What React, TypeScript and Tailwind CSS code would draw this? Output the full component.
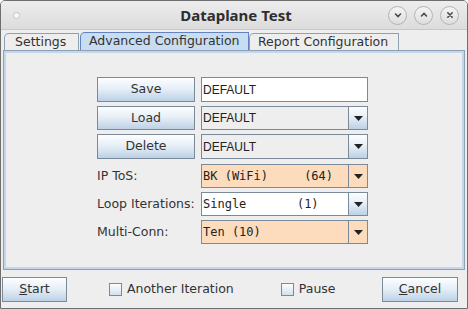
import React from 'react';

const ui = { fontFamily: '"DejaVu Sans", sans-serif' };
const field = { fontFamily: '"Liberation Sans", Arial, sans-serif' };
const mono = { fontFamily: '"DejaVu Sans Mono", monospace' };

function Arrow() {
  return (
    <svg width="9" height="5" viewBox="0 0 9 5">
      <path d="M0 0 H9 L4.5 5 Z" fill="#222" />
    </svg>
  );
}

function SwingButton({ children, className = '' }: { children: React.ReactNode; className?: string }) {
  return (
    <div
      className={`flex items-center justify-center border border-[#7a8a99] bg-gradient-to-b from-[#fdfeff] via-[#e4edf6] to-[#bcd1e6] text-[12.5px] text-[#333] ${className}`}
      style={ui}
    >
      {children}
    </div>
  );
}

function Combo({
  text,
  monoFont = false,
  bg = 'gray',
  h = 'h-[24px]',
}: {
  text: string;
  monoFont?: boolean;
  bg?: 'gray' | 'white' | 'peach';
  h?: string;
}) {
  const fieldBg = bg === 'peach' ? 'bg-[#fcdcbc]' : bg === 'white' ? 'bg-white' : 'bg-[#eeeeee]';
  const arrowBg =
    bg === 'peach'
      ? 'bg-[#fcdcbc]'
      : 'bg-gradient-to-b from-[#fdfeff] via-[#e4edf6] to-[#bcd1e6]';
  return (
    <div className={`flex w-[167px] ${h} border border-[#7a8a99]`}>
      <div
        className={`flex-1 flex items-center pl-[1px] whitespace-pre text-[12px] text-[#222] border-r border-[#7a8a99] ${fieldBg}`}
        style={monoFont ? mono : field}
      >
        {text}
      </div>
      <div className={`w-[18px] flex items-center justify-center ${arrowBg}`}>
        <Arrow />
      </div>
    </div>
  );
}

function Check({ label }: { label: string }) {
  return (
    <div className="flex items-center gap-[5px]" style={ui}>
      <div className="w-[13px] h-[13px] border border-[#7a8a99] bg-gradient-to-b from-[#fdfeff] to-[#d2e0ee]" />
      <span className="text-[12.5px] text-[#333]">{label}</span>
    </div>
  );
}

function TitleButton({ kind }: { kind: 'min' | 'max' | 'close' }) {
  return (
    <div className="w-[19px] h-[19px] rounded-full border border-[#b4b4b4] bg-gradient-to-b from-[#f4f4f4] to-[#dedede] flex items-center justify-center">
      <svg width="8" height="8" viewBox="0 0 8 8" fill="none" stroke="#4a4a4a" strokeWidth="1.6" strokeLinecap="round">
        {kind === 'min' && <path d="M1.5 3 L4 5.5 L6.5 3" />}
        {kind === 'max' && <path d="M1.5 5 L4 2.5 L6.5 5" />}
        {kind === 'close' && <path d="M1.8 1.8 L6.2 6.2 M6.2 1.8 L1.8 6.2" />}
      </svg>
    </div>
  );
}

export default function App() {
  return (
    <div className="w-[468px] h-[309px] bg-[#eeeeee] border border-[#6e6e6e] rounded-t-[5px] overflow-hidden flex flex-col" style={ui}>
      {/* title bar */}
      <div className="h-[29px] shrink-0 flex items-center px-[12px] bg-gradient-to-b from-[#ededed] to-[#dcdcdc] border-b border-[#c8c8c8]">
        <div className="w-[7px] h-[7px] rounded-full bg-[#f8f8f8] border border-[#c4c4c4]" />
        <div className="flex-1 text-center text-[15px] font-bold text-[#2e2e2e] pl-[64px]" style={{ fontFamily: '"Noto Sans", sans-serif' }}>
          Dataplane Test
        </div>
        <div className="flex items-center gap-[7px] -mr-[4px]">
          <TitleButton kind="min" />
          <TitleButton kind="max" />
          <TitleButton kind="close" />
        </div>
      </div>

      {/* tabs */}
      <div className="h-[20px] shrink-0 flex items-end pl-[3px] text-[12.5px] text-[#333]">
        <div className="w-[75px] h-[17px] flex items-center pl-[10px] border border-b-0 border-[#8da0b4] rounded-tl-[5px] bg-[#eeeeee]">
          Settings
        </div>
        <div className="w-[169px] h-[18px] flex items-center pl-[8px] border border-b-0 border-[#6382bf] rounded-tl-[5px] bg-[#c8ddf2] ml-[1px]">
          Advanced Configuration
        </div>
        <div className="w-[150px] h-[17px] flex items-center pl-[8px] border border-b-0 border-[#8da0b4] rounded-tl-[5px] bg-[#eeeeee]">
          Report Configuration
        </div>
      </div>

      {/* panel */}
      <div className="mx-[2px] h-[220px] shrink-0 border border-[#8da0b4]">
        <div className="h-full border-2 border-[#c4d6e8] pt-[24px] pl-[91px] flex flex-col">
          <div className="flex gap-[6px] h-[25px]">
            <SwingButton className="w-[98px] h-[25px]">Save</SwingButton>
            <div className="w-[167px] h-[25px] bg-white border border-[#7a8a99] flex items-center pl-[1px] text-[12px] text-[#222]" style={field}>
              DEFAULT
            </div>
          </div>
          <div className="flex gap-[6px] mt-[4px]">
            <SwingButton className="w-[98px] h-[24px]">Load</SwingButton>
            <Combo text="DEFAULT" />
          </div>
          <div className="flex gap-[6px] mt-[4px]">
            <SwingButton className="w-[98px] h-[25px]">Delete</SwingButton>
            <Combo text="DEFAULT" h="h-[25px]" />
          </div>
          <div className="flex gap-[6px] mt-[5px] items-center">
            <div className="w-[98px] text-[12.5px] text-[#333]">IP ToS:</div>
            <Combo text="BK (WiFi)     (64)" monoFont bg="peach" />
          </div>
          <div className="flex gap-[6px] mt-[4px] items-center">
            <div className="w-[98px] text-[12.5px] text-[#333] whitespace-nowrap">Loop Iterations:</div>
            <Combo text="Single       (1)" monoFont bg="white" />
          </div>
          <div className="flex gap-[6px] mt-[4px] items-center">
            <div className="w-[98px] text-[12.5px] text-[#333]">Multi-Conn:</div>
            <Combo text="Ten (10)" monoFont bg="peach" />
          </div>
        </div>
      </div>

      {/* bottom bar */}
      <div className="flex-1 flex items-center pl-[1px] pr-[9px]">
        <SwingButton className="w-[65px] h-[25px]">
          <span><span className="underline">S</span>tart</span>
        </SwingButton>
        <div className="ml-[42px]">
          <Check label="Another Iteration" />
        </div>
        <div className="ml-[47px]">
          <Check label="Pause" />
        </div>
        <SwingButton className="w-[76px] h-[25px] ml-auto">
          <span><span className="underline">C</span>ancel</span>
        </SwingButton>
      </div>
    </div>
  );
}
